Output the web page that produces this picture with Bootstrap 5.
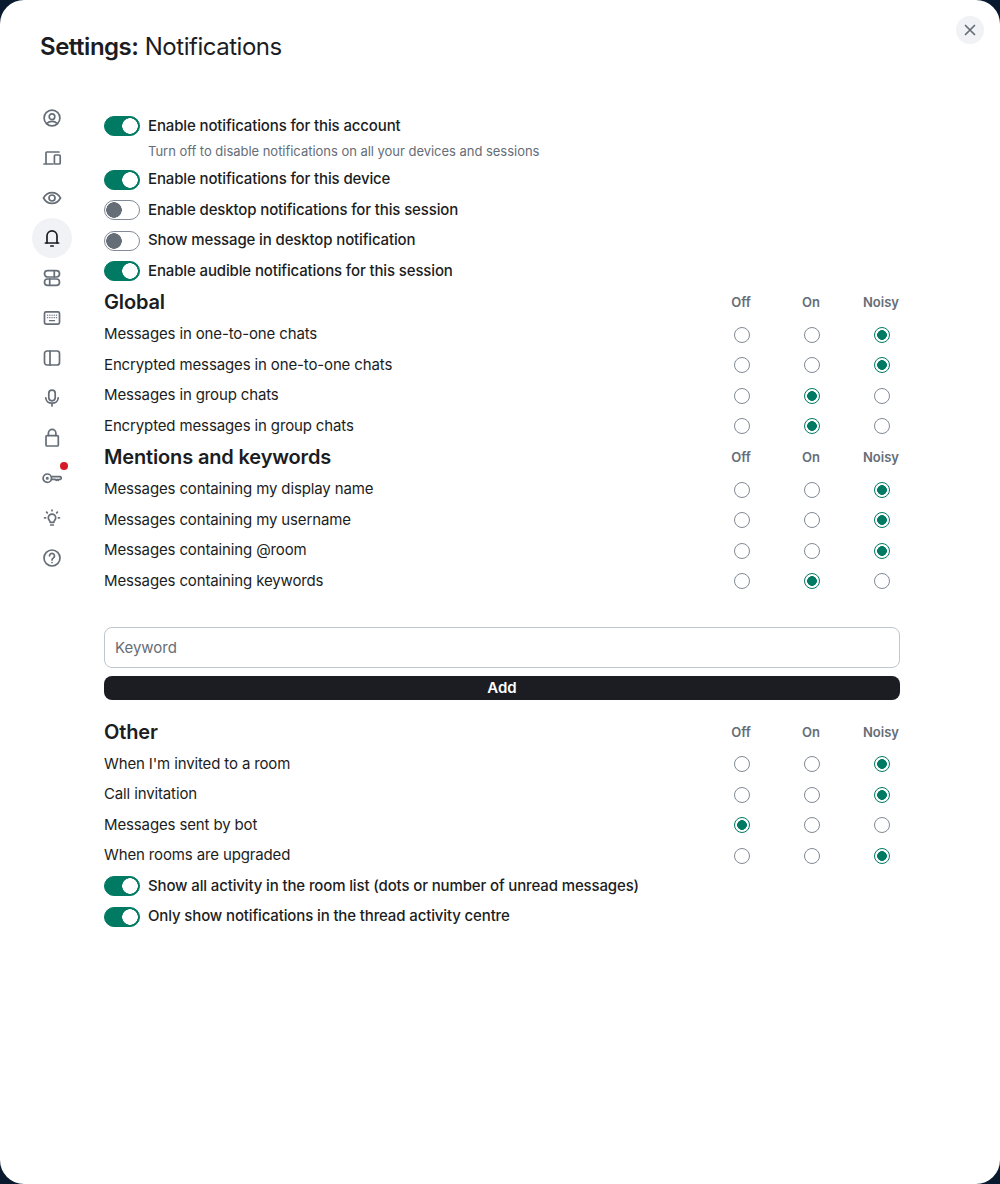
<!DOCTYPE html>
<html lang="en">
<head>
  <meta charset="UTF-8">
  <meta name="viewport" content="width=device-width, initial-scale=1.0">
  <title>Settings: Notifications</title>
  <link href="https://cdn.jsdelivr.net/npm/bootstrap@5.3.0/dist/css/bootstrap.min.css" rel="stylesheet">
  <style>
    body { background: #0a1a2e; font-family: Inter, "Liberation Sans", sans-serif; color: #1b1d22; }
    .settings-dialog { height: 1184px; background: #fff; border-radius: 24px; padding: 31px 100px 0 32px; }
    .settings-title { font-size: 24px; line-height: 32px; font-weight: 400; margin: 0 0 35px 8px; letter-spacing: -0.48px; }
    .settings-title b { font-weight: 600; }
    .close-round { top: 16px; right: 16px; width: 28px; height: 28px; border: 0; border-radius: 50%; background: #f0f2f5; padding: 0; }
    .side-tabs { width: 72px; gap: 0; }
    .side-tab { width: 40px; height: 40px; border-radius: 50%; color: #656d77; }
    .side-tab.is-active { background: #f0f2f5; color: #1b1d22; }
    .side-tab svg { width: 20px; height: 20px; fill: none; stroke: currentColor; stroke-width: 1.7; stroke-linecap: round; stroke-linejoin: round; }
    .alert-dot { top: 4px; right: 4px; width: 8px; height: 8px; background: #d51928; border-radius: 50%; }
    .panel { padding-top: 16.5px; gap: 8px; }
    .opt-row { min-height: 22.5px; font-size: 15px; line-height: 22.5px; letter-spacing: -0.135px; }
    .opt-head { font-size: 20px; line-height: 24px; font-weight: 600; letter-spacing: -0.15px; }
    .head-line { margin-bottom: 1px; }
    .opt-cols { gap: 34px; }
    .opt-cell { width: 36px; text-align: center; line-height: 0; }
    .opt-name { font-size: 13px; line-height: 16px; font-weight: 600; color: #656d77; margin-left: -1px; margin-right: 1px; white-space: nowrap; }
    .toggle-row { font-weight: 500; }
    .toggle-row .form-check-input { width: 36px; height: 20px; margin: 0 8px 0 0; flex: none; border: 1px solid #818a95; background-color: #fff; border-radius: 10px; box-shadow: none; background-image: radial-gradient(circle at 9px 9px, #656d77 0 7.5px, transparent 8px); }
    .toggle-row .form-check-input:checked { background-color: #007a62; border-color: #007a62; background-image: radial-gradient(circle at 25px 9px, #fff 0 7.5px, transparent 8px); }
    .toggle-note { font-size: 13px; line-height: 18px; letter-spacing: -0.03px; color: #656d77; margin: 5px 0 0.4px 44px; }
    .opt-cell .form-check-input { width: 16px; height: 16px; margin: 0; float: none; border: 1px solid #818a95; background-color: #fff; box-shadow: none; vertical-align: top; }
    .opt-cell .form-check-input:checked { border-color: #007a62; background-color: #fff; background-image: radial-gradient(circle, #007a62 0 4.6px, transparent 5.1px); }
    .keyword-box { height: 41px; margin-top: 26.5px; font-size: 15px; color: #1b1d22; border: 1px solid #c0c6cf; border-radius: 8px; padding: 0 10px; box-shadow: none; }
    .keyword-box::placeholder { color: #656d77; }
    .add-btn { height: 24px; padding: 0; background: #1b1d22; border: 0; border-radius: 8px; color: #fff; font-size: 15px; line-height: 24px; font-weight: 600; }
    .gap-extra { margin-top: 12px; }
  </style>
</head>
<body>
  <div class="settings-dialog position-relative overflow-hidden">
    <button class="close-round position-absolute d-flex align-items-center justify-content-center" aria-label="Close">
      <svg width="14" height="14" viewBox="0 0 14 14" fill="none" stroke="#656d77" stroke-width="1.7" stroke-linecap="round"><path d="M2.5 2.5l9 9M11.5 2.5l-9 9"/></svg>
    </button>
    <h1 class="settings-title"><b>Settings:</b> Notifications</h1>
    <div class="d-flex">
      <div class="side-tabs d-flex flex-column flex-shrink-0">
        <div class="side-tab d-flex align-items-center justify-content-center"><svg viewBox="0 0 20 20"><circle cx="10" cy="10" r="7.900"/><circle cx="10" cy="8.700" r="2.800"/><path d="M4.800 15.800c1-1.700 3-2.500 5.200-2.500s4.200.8 5.200 2.500"/></svg></div>
        <div class="side-tab d-flex align-items-center justify-content-center"><svg viewBox="0 0 20 20"><path d="M4 15.500V4.800c0-.5.4-.8.8-.8H17"/><path d="M2 16h9"/><rect x="12.400" y="7" width="5.800" height="9" rx="1"/></svg></div>
        <div class="side-tab d-flex align-items-center justify-content-center"><svg viewBox="0 0 20 20"><path d="M1.500 10c2-3.700 4.900-5.400 8.500-5.400s6.500 1.700 8.500 5.400c-2 3.700-4.900 5.400-8.500 5.400S3.500 13.700 1.500 10z"/><circle cx="10" cy="10" r="3"/></svg></div>
        <div class="side-tab is-active d-flex align-items-center justify-content-center"><svg viewBox="0 0 20 20"><path d="M3.400 15h13.200"/><path d="M5 15V7.800a5 5 0 0 1 10 0V15"/><path d="M8.800 18h2.400"/></svg></div>
        <div class="side-tab d-flex align-items-center justify-content-center"><svg viewBox="0 0 20 20"><rect x="2.500" y="2.700" width="15" height="6.300" rx="3.150"/><rect x="2.500" y="11" width="15" height="6.300" rx="3.150"/><path d="M12.300 2.900v5.900M7.700 11.200v5.900"/></svg></div>
        <div class="side-tab d-flex align-items-center justify-content-center"><svg viewBox="0 0 20 20"><rect x="2.500" y="3.800" width="15" height="12.400" rx="1.600"/><path stroke-width="1.300" d="M5.600 7.200h.1M7.800 7.200h.1M10 7.200h.1M12.200 7.200h.1M14.400 7.200h.1M5.600 9.700h.1M7.800 9.700h.1M10 9.700h.1M12.200 9.700h.1M14.400 9.700h.1M7.500 12.700h5"/></svg></div>
        <div class="side-tab d-flex align-items-center justify-content-center"><svg viewBox="0 0 20 20"><rect x="2.500" y="3" width="15" height="14" rx="2.500"/><path d="M8 3v14"/></svg></div>
        <div class="side-tab d-flex align-items-center justify-content-center"><svg viewBox="0 0 20 20"><rect x="6.800" y="2.200" width="6.400" height="10.600" rx="3.200"/><path d="M3.800 9.800c0 3.300 2.800 5.400 6.200 5.400s6.200-2.100 6.200-5.400M10 15.200v2.800"/></svg></div>
        <div class="side-tab d-flex align-items-center justify-content-center"><svg viewBox="0 0 20 20"><rect x="4" y="7.600" width="12.300" height="10.400" rx="1"/><path d="M6.400 7.400V5.200a3.750 3.750 0 0 1 7.500 0v2.200"/></svg></div>
        <div class="side-tab position-relative d-flex align-items-center justify-content-center"><svg viewBox="0 0 20 20"><circle cx="5.300" cy="10.200" r="4.200"/><circle cx="5.300" cy="10.200" r=".7"/><path d="M9.500 8.600h8.900l1.200 1.500-1.200 1.300-1.300-.1-.8 1-1-1-1 1-1-1H9.500"/></svg><span class="alert-dot position-absolute"></span></div>
        <div class="side-tab d-flex align-items-center justify-content-center"><svg viewBox="0 0 20 20"><path d="M8.200 14.300c0-1.500-1.900-2.100-1.900-4.500a3.700 3.700 0 0 1 7.400 0c0 2.400-1.900 3-1.900 4.500z"/><path d="M8.700 17h2.600M2.600 9.800h1M16.400 9.800h1M4.600 4.200l.7.700M15.400 4.200l-.7.700M10 2v.7"/></svg></div>
        <div class="side-tab d-flex align-items-center justify-content-center"><svg viewBox="0 0 20 20"><circle cx="10" cy="10" r="8"/><path d="M7.500 7.800a2.500 2.500 0 1 1 3.900 2.100c-.9.600-1.400 1-1.400 2"/><path d="M10 14.500h.01"/></svg></div>
      </div>
      <div id="panel" class="panel flex-grow-1 d-flex flex-column"></div>
    </div>
  </div>
  <script>
    // 0 off, 1 on, 2 noisy
    const panel = document.getElementById('panel');

    function toggleRow(label, checked, note) {
      return `<div><div class="opt-row toggle-row d-flex align-items-center">
        <input class="form-check-input" type="checkbox" ${checked ? 'checked' : ''}><span>${label}</span>
      </div>${note ? `<div class="toggle-note">${note}</div>` : ''}</div>`;
    }

    function headRow(title) {
      return `<div class="head-line d-flex justify-content-between align-items-center">
        <div class="opt-head">${title}</div>
        <div class="opt-cols d-flex">
          ${['Off', 'On', 'Noisy'].map(n => `<div class="opt-cell opt-name">${n}</div>`).join('')}
        </div>
      </div>`;
    }

    let groupId = 0;
    function radioRow(label, value) {
      groupId++;
      const cells = [0, 1, 2].map(i =>
        `<div class="opt-cell"><input class="form-check-input" type="radio" name="rule${groupId}" ${i === value ? 'checked' : ''}></div>`
      ).join('');
      return `<div class="opt-row d-flex justify-content-between align-items-center">
        <span>${label}</span><div class="opt-cols d-flex">${cells}</div>
      </div>`;
    }

    panel.innerHTML = [
      toggleRow('Enable notifications for this account', true, 'Turn off to disable notifications on all your devices and sessions'),
      toggleRow('Enable notifications for this device', true),
      toggleRow('Enable desktop notifications for this session', false),
      toggleRow('Show message in desktop notification', false),
      toggleRow('Enable audible notifications for this session', true),
      headRow('Global'),
      radioRow('Messages in one-to-one chats', 2),
      radioRow('Encrypted messages in one-to-one chats', 2),
      radioRow('Messages in group chats', 1),
      radioRow('Encrypted messages in group chats', 1),
      headRow('Mentions and keywords'),
      radioRow('Messages containing my display name', 2),
      radioRow('Messages containing my username', 2),
      radioRow('Messages containing @room', 2),
      radioRow('Messages containing keywords', 1),
      '<input class="form-control keyword-box" type="text" placeholder="Keyword">',
      '<button class="btn add-btn w-100">Add</button>',
      '<div class="gap-extra">' + headRow('Other') + '</div>',
      radioRow("When I'm invited to a room", 2),
      radioRow('Call invitation', 2),
      radioRow('Messages sent by bot', 0),
      radioRow('When rooms are upgraded', 2),
      toggleRow('Show all activity in the room list (dots or number of unread messages)', true),
      toggleRow('Only show notifications in the thread activity centre', true)
    ].join('');
  </script>
  <script src="https://cdn.jsdelivr.net/npm/bootstrap@5.3.0/dist/js/bootstrap.bundle.min.js"></script>
</body>
</html>
